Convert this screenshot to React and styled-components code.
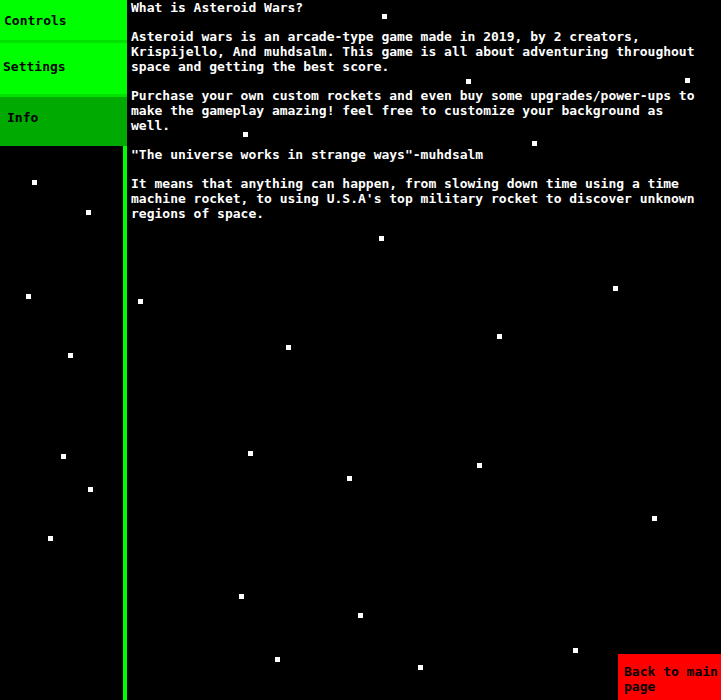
import React from "react";
import styled, { createGlobalStyle } from "styled-components";

const GlobalStyle = createGlobalStyle`
  *, *::before, *::after { box-sizing: border-box; }
  body {
    margin: 0;
    background: #000;
    color: #fff;
    font: bold 13px/15px "DejaVu Sans Mono", "Liberation Mono", monospace;
  }
`;

const Page = styled.div`
  position: relative;
  display: grid;
  grid-template-columns: 127px minmax(0, 1fr);
  min-height: 100vh;
  overflow: hidden;
`;

const Sky = styled.svg`
  position: absolute;
  inset: 0;
  width: 100%;
  height: 100%;
  fill: #fff;
  pointer-events: none;
`;

const Sidebar = styled.aside`
  position: relative;
  display: flex;
  flex-direction: column;
  background: linear-gradient(#0f0, #0f0) right / 4px 100% no-repeat;
`;

const Tabs = styled.nav`
  display: flex;
  flex-direction: column;
`;

const Tab = styled.button`
  height: ${(p) => p.$height}px;
  padding: 0 0 ${(p) => p.$lift}px ${(p) => p.$indent}px;
  border: 0;
  border-bottom: ${(p) => (p.$active ? 0 : 3)}px solid #00e100;
  background: ${(p) => (p.$active ? "#00aa00" : "#00ff00")};
  color: #000;
  font: inherit;
  text-align: left;
  cursor: pointer;
`;

const Main = styled.main`
  position: relative;
  display: flex;
  flex-direction: column;
`;

const Article = styled.article`
  display: flex;
  flex-direction: column;
  gap: 14px;
  padding: 0 16px 0 4px;
`;

const Title = styled.h1`
  margin: 0;
  font: inherit;
`;

const Text = styled.p`
  margin: 0;
`;

const BackButton = styled.button`
  align-self: flex-end;
  width: 103px;
  margin-top: auto;
  padding: 10px 0 6px 6px;
  border: 0;
  background: #f00;
  color: #000;
  font: inherit;
  text-align: left;
  cursor: pointer;
`;

const stars = [
  [382, 14], [466, 79], [685, 78], [243, 132], [532, 141],
  [32, 180], [86, 210], [379, 236], [26, 294], [138, 299],
  [613, 286], [497, 334], [286, 345], [68, 353], [248, 451],
  [477, 463], [347, 476], [61, 454], [88, 487], [652, 516],
  [48, 536], [239, 594], [358, 613], [573, 648], [275, 657],
  [418, 665],
];

const tabs = [
  { label: "Controls", height: 43, indent: 4, lift: 0 },
  { label: "Settings", height: 54, indent: 3, lift: 4 },
  { label: "Info", height: 49, indent: 7, lift: 8, active: true },
];

const paragraphs = [
  "Asteroid wars is an arcade-type game made in 2019, by 2 creators, Krispijello, And muhdsalm. This game is all about adventuring throughout space and getting the best score.",
  "Purchase your own custom rockets and even buy some upgrades/power-ups to make the gameplay amazing! feel free to customize your background as well.",
  "\"The universe works in strange ways\"-muhdsalm",
  "It means that anything can happen, from slowing down time using a time machine rocket, to using U.S.A's top military rocket to discover unknown regions of space.",
];

export default function App() {
  return (
    <>
      <GlobalStyle />
      <Page>
        <Sky aria-hidden="true">
          {stars.map(([x, y]) => (
            <rect key={`${x}-${y}`} x={x} y={y} width="5" height="5" />
          ))}
        </Sky>
        <Sidebar>
          <Tabs aria-label="Menu">
            {tabs.map((t) => (
              <Tab
                key={t.label}
                type="button"
                $height={t.height}
                $indent={t.indent}
                $lift={t.lift}
                $active={t.active}
                aria-current={t.active ? "page" : undefined}
              >
                {t.label}
              </Tab>
            ))}
          </Tabs>
        </Sidebar>
        <Main>
          <Article>
            <Title>What is Asteroid Wars?</Title>
            {paragraphs.map((text) => (
              <Text key={text}>{text}</Text>
            ))}
          </Article>
          <BackButton type="button">Back to main page</BackButton>
        </Main>
      </Page>
    </>
  );
}
